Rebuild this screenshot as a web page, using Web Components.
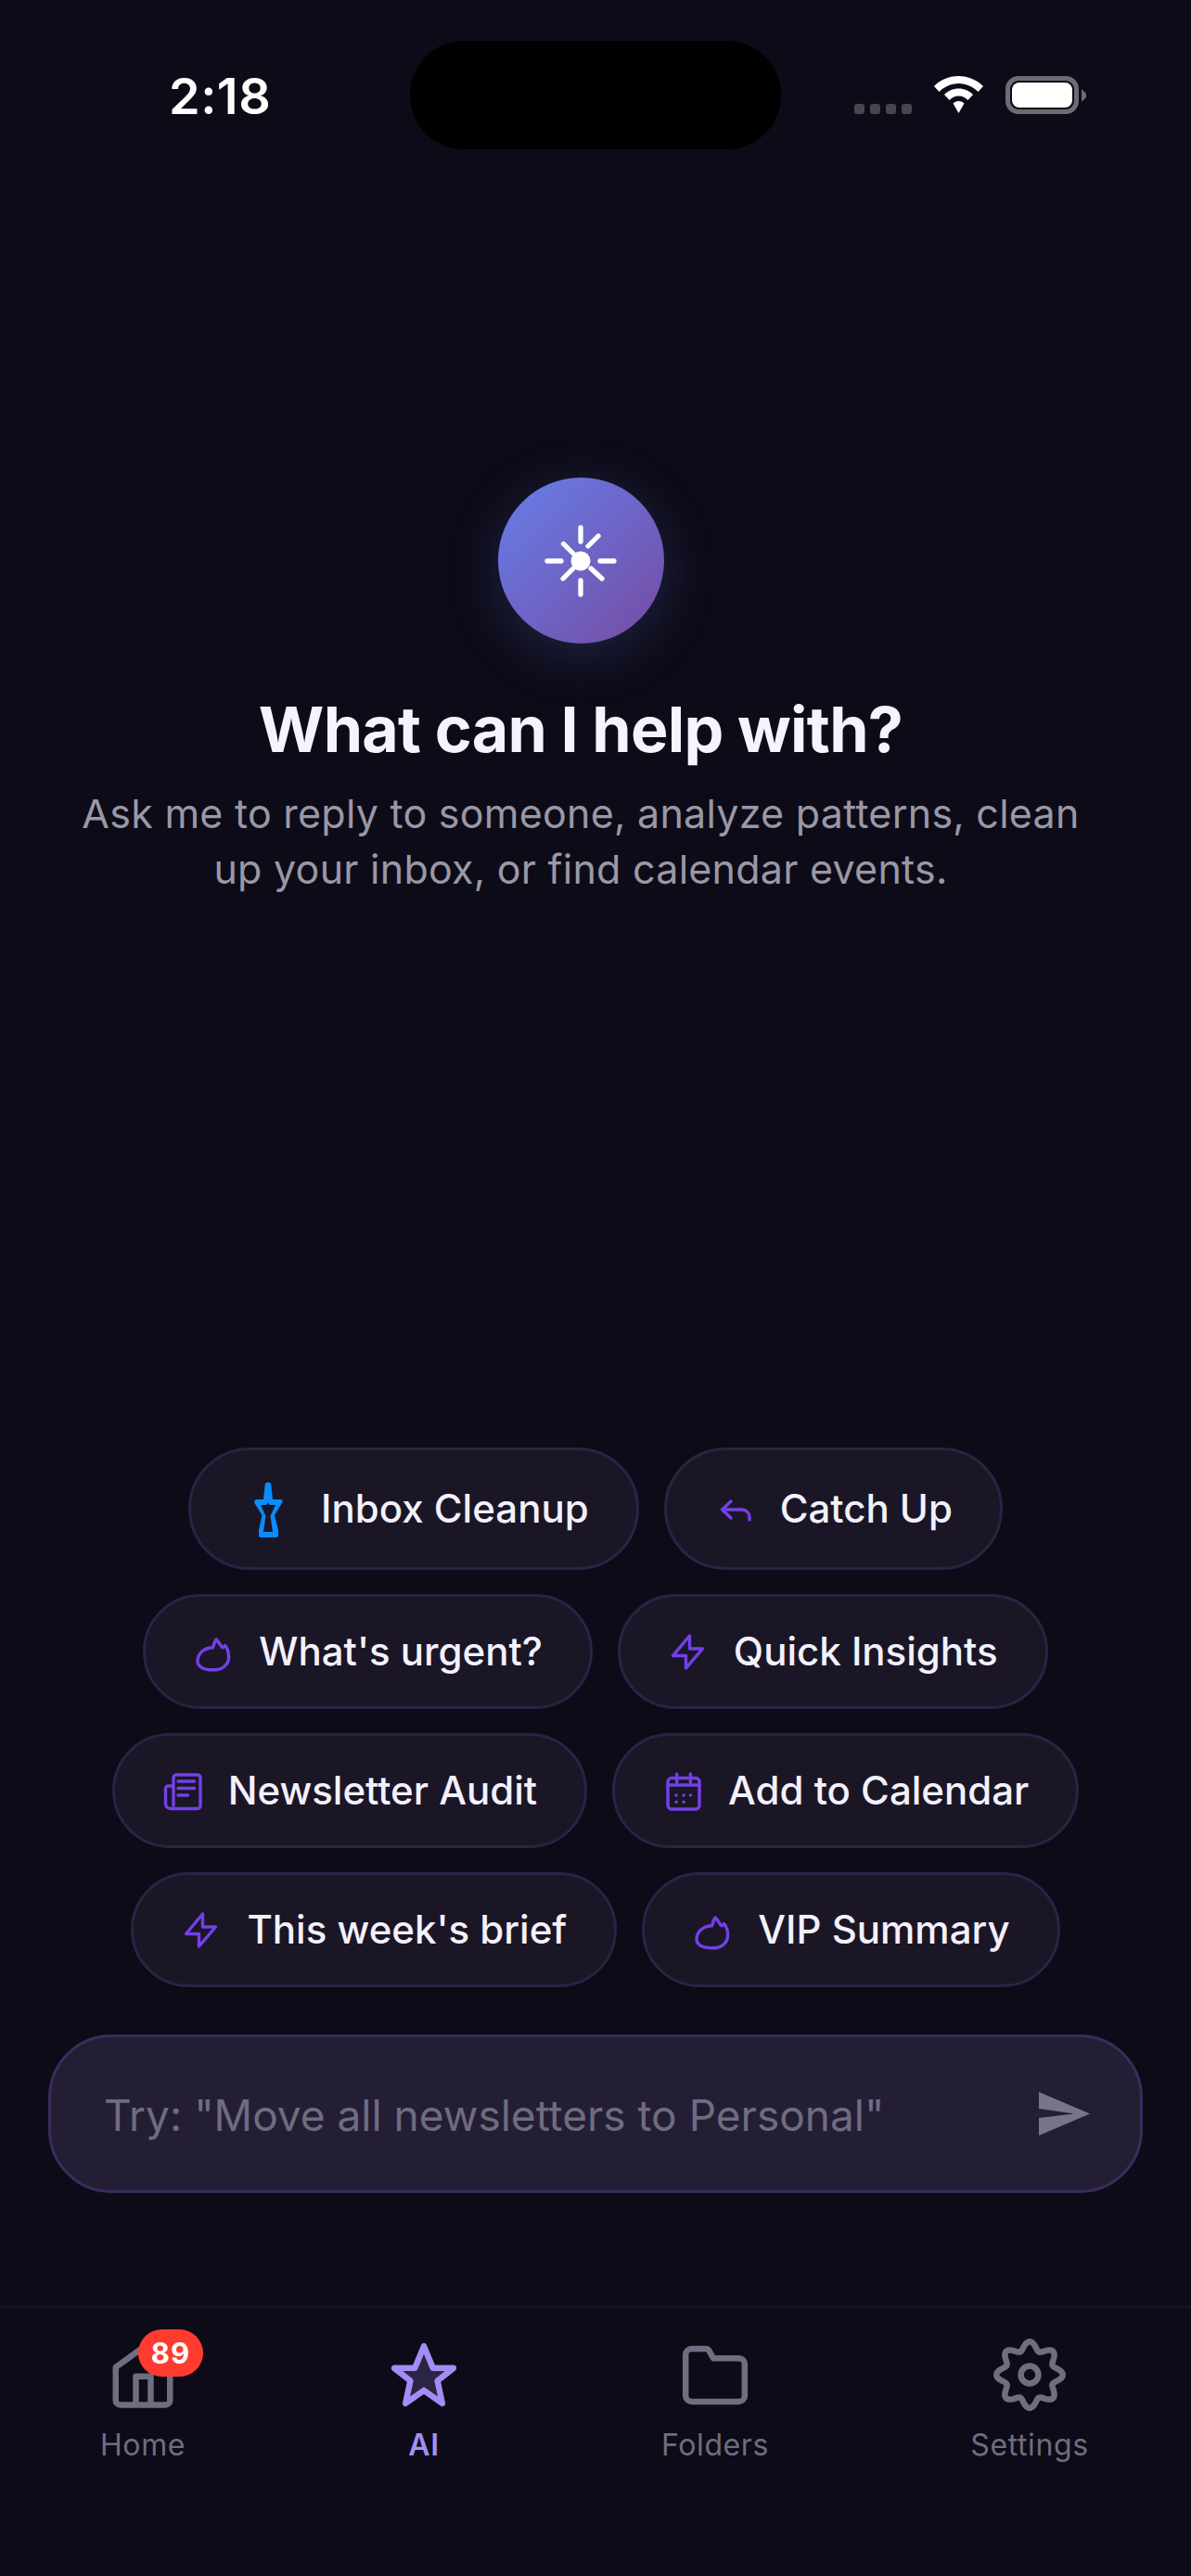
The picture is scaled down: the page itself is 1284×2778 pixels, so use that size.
<!DOCTYPE html>
<html>
<head>
<meta charset="utf-8">
<title>AI</title>
<style>
  html, body { margin: 0; background: #0d0b18; }
  body { font-family: Inter, "Liberation Sans", sans-serif; }
</style>
</head>
<body>
<app-shell>
  <status-bar time="2:18"></status-bar>
  <ai-hero>
    <span slot="title">What can I help with?</span>
    Ask me to reply to someone, analyze patterns, clean<br>up your inbox, or find calendar events.
  </ai-hero>
  <chip-list>
    <ai-chip icon="broom" style="--chip-h:132px;--icon-w:60px">Inbox Cleanup</ai-chip>
    <ai-chip icon="reply">Catch Up</ai-chip>
    <ai-chip icon="flame">What's urgent?</ai-chip>
    <ai-chip icon="bolt">Quick Insights</ai-chip>
    <ai-chip icon="news">Newsletter Audit</ai-chip>
    <ai-chip icon="calendar">Add to Calendar</ai-chip>
    <ai-chip icon="bolt">This week's brief</ai-chip>
    <ai-chip icon="flame">VIP Summary</ai-chip>
  </chip-list>
  <ask-input>Try: "Move all newsletters to Personal"</ask-input>
  <tab-bar>
    <tab-item icon="home" badge="89">Home</tab-item>
    <tab-item icon="star" active>AI</tab-item>
    <tab-item icon="folder">Folders</tab-item>
    <tab-item icon="gear">Settings</tab-item>
  </tab-bar>
</app-shell>

<script>
const CHIP_ICONS = {
  broom: `<svg width="60" height="70" viewBox="21 2 60 70"><path fill="#0a8bff" stroke="none" fill-rule="evenodd" d="M50 8.5Q53 8.5 53.3 11L55 27H64Q66.5 28 65.5 30L57 44 61 60V66Q61 68 59 68H42Q40 68 40 66V60L43.5 44 35.5 31Q34.5 28 37 27H45L46.7 11Q47 8.5 50 8.5ZM42 33H48L50 30.5 52 33H58L52.5 45 55 62H45L47.5 45Z"/></svg>`,
  reply: `<svg width="42" height="42" viewBox="0 0 42 42"><path d="M15 13 5.5 22 15 31M5.5 22H27a8 8 0 0 1 8 8v3"/></svg>`,
  flame: `<svg width="42" height="42" viewBox="0 -6 42 42"><path d="M18.5 10.8C20 7 20.5 3 22.2 2 24 4 27 8.5 28.8 10.8 29.8 10.5 30.8 9.5 31.6 8.5 34.5 12 35.6 17 35.6 21 35.6 30 28 34.8 18.5 34.8 9 34.8 2 31.5 2 25.5 2 16.5 10 10.8 18.5 10.8Z"/></svg>`,
  bolt: `<svg width="42" height="42" viewBox="0 0 42 42"><path d="M20.5 4 2.5 25.5H16.5V39L34.5 18H20.5Z"/></svg>`,
  news: `<svg width="42" height="42" viewBox="0 0 42 42"><path d="M9 37V7a3 3 0 0 1 3-3h23a3 3 0 0 1 3 3v30.5a3 3 0 0 1-3 3H6a5.5 5.5 0 0 1-5.5-5.5V19a3 3 0 0 1 3-3H9M14 11H31.5M14 18.5H31.5M14 26H24.5"/></svg>`,
  calendar: `<svg width="42" height="42" viewBox="0 0 42 42"><rect x="3" y="7.5" width="34" height="33.5" rx="4"/><path d="M12.7 3V12M27.4 3V12M3 15H37"/><g fill="#7340e8" stroke="none"><circle cx="12" cy="26" r="1.7"/><circle cx="20" cy="26" r="1.7"/><circle cx="27.4" cy="26" r="1.7"/><circle cx="12" cy="33.3" r="1.7"/><circle cx="20" cy="33.3" r="1.7"/></g></svg>`
};

function gearPath() {
  // eight soft lobes, same as the tab icon
  let d = "";
  for (let i = 0; i <= 240; i++) {
    const a = (i / 240) * Math.PI * 2 - Math.PI / 2;
    const r = 9.6 + 1.4 * Math.cos(8 * (a + Math.PI / 2));
    d += (i ? "L" : "M") + (12 + r * Math.cos(a)).toFixed(2) + " " + (12 + r * Math.sin(a)).toFixed(2);
  }
  return d + "Z";
}

const TAB_ICONS = {
  home: `<path d="M3 9.5 12 3l9 6.5V20.500a1.500 1.500 0 0 1-1.500 1.500H4.500A1.500 1.500 0 0 1 3 20.500ZM9.700 22V12.500H14.600V22"/>`,
  star: `<path fill="rgba(167,139,250,.2)" d="M12 2.500 15 9.800H21.800L16.500 14 18.100 21.500 12 17.200 5.900 21.500 7.500 14 2.200 9.800H9Z"/>`,
  folder: `<path d="M4.200 3.400H9a1 1 0 0 1 .9.5L11.400 6.500H19.800a2 2 0 0 1 2 2V18.900a2 2 0 0 1-2 2H4.200a2 2 0 0 1-2-2V5.400a2 2 0 0 1 2-2Z"/>`,
  gear: `<path d="${gearPath()}"/><circle cx="12" cy="12" r="2.9"/>`
};

class AppShell extends HTMLElement {
  constructor() {
    super();
    this.attachShadow({ mode: "open" }).innerHTML = `
      <style>
        :host { display: flex; flex-direction: column; width: 1284px; height: 2778px; overflow: hidden; background: #0d0b18; color: #f2f0fa; }
      </style>
      <slot></slot>`;
  }
}

class StatusBar extends HTMLElement {
  constructor() {
    super();
    this.attachShadow({ mode: "open" }).innerHTML = `
      <style>
        :host { display: grid; grid-template-columns: 442px 400px 442px; padding-top: 44px; height: 117px; }
        .time { padding: 33px 0 0 182px; font: 600 54px/53px Inter, sans-serif; color: #fff; letter-spacing: .5px; }
        .notch { background: #000; border-radius: 58px; }
        .right { display: flex; align-items: flex-start; padding: 38px 0 0 79px; }
        .dots { display: flex; gap: 6px; margin-top: 30px; }
        .dots i { width: 11px; height: 11px; border-radius: 3px; background: #47454f; }
        svg { display: block; }
        .wifi { margin-left: 24px; }
        .batt { margin-left: 24px; width: 79px; height: 41px; box-sizing: border-box; border: 5px solid #6d6b75; border-radius: 14px; padding: 2px; }
        .batt b { display: block; height: 100%; background: #fff; border-radius: 8px; }
        .cap { width: 5px; height: 14px; margin: 14px 0 0 3px; background: #6d6b75; clip-path: polygon(0 0, 100% 35%, 100% 65%, 0 100%); }
      </style>
      <div class="time"></div>
      <div class="notch"></div>
      <div class="right">
        <div class="dots"><i></i><i></i><i></i><i></i></div>
        <svg class="wifi" width="53" height="40" viewBox="0 0 53 40">
          <path fill="#fff" d="M26.5 0C36.5 0 46 4 53 11L47.5 17C42 11.500 34.500 8 26.500 8S11 11.500 5.500 17L0 11C7 4 16.500 0 26.500 0Z"/>
          <path fill="#fff" d="M26.500 13.500C32.500 13.500 38 16 42 20L36.500 26C34 23.500 30.500 21.500 26.500 21.500S19 23.500 16.500 26L11 20C15 16 20.500 13.500 26.500 13.500Z"/>
          <path fill="#fff" d="M26.500 27C29 27 31 28 32.500 29.500L26.500 40 20.500 29.500C22 28 24 27 26.500 27Z"/>
        </svg>
        <div class="batt"><b></b></div>
        <div class="cap"></div>
      </div>`;
    this.shadowRoot.querySelector(".time").textContent = this.getAttribute("time");
  }
}

class AiHero extends HTMLElement {
  constructor() {
    super();
    this.attachShadow({ mode: "open" }).innerHTML = `
      <style>
        :host { display: flex; flex-direction: column; align-items: center; padding: 354px 32px 0 0; height: 1400px; box-sizing: border-box; text-align: center; }
        .logo { width: 179px; height: 179px; border-radius: 50%; background: linear-gradient(135deg, #667eea, #764ba2); box-shadow: 0 12px 60px rgba(102,126,234,.22); display: flex; align-items: center; justify-content: center; }
        svg { display: block; }
        h1 { margin: 52px 0 0; font: 700 68px/80px Inter, sans-serif; color: #f5f3fb; letter-spacing: -.7px; }
        p { margin: 21px 0 0; font: 400 43px/60px Inter, sans-serif; color: #9a98a6; letter-spacing: .25px; }
      </style>
      <div class="logo">
        <svg width="80" height="80" viewBox="-40 -40 80 80" fill="none" stroke="#fff" stroke-width="5.3" stroke-linecap="round">
          <circle r="10.500" fill="#fff" stroke="none"/>
          <path d="M0-36V-21M0 21V36M-36 0H-21M21 0H36M-18.500-18.500-8-8M8-16 19-27M11 8 23 19M-19 19-8 8"/>
        </svg>
      </div>
      <h1><slot name="title"></slot></h1>
      <p><slot></slot></p>`;
  }
}

class ChipList extends HTMLElement {
  constructor() {
    super();
    this.attachShadow({ mode: "open" }).innerHTML = `
      <style>
        :host { display: flex; flex-wrap: wrap; justify-content: center; gap: 26px 27px; padding: 0 40px; }
      </style>
      <slot></slot>`;
  }
}

class AiChip extends HTMLElement {
  constructor() {
    super();
    this.attachShadow({ mode: "open" }).innerHTML = `
      <style>
        :host { display: flex; align-items: center; gap: 26px; box-sizing: border-box; min-height: var(--chip-h, 124px); padding: 0 51px 0 54px; background: #1b1626; border: 3px solid #2b2245; border-radius: 66px; color: #f3f1fb; font: 550 42px/50px Inter, sans-serif; white-space: nowrap; }
        .icon { flex: none; width: var(--icon-w, 42px); display: flex; justify-content: center; }
        svg { display: block; overflow: visible; fill: none; stroke: #7340e8; stroke-width: 3.4; stroke-linecap: round; stroke-linejoin: round; }
      </style>
      <span class="icon">${CHIP_ICONS[this.getAttribute("icon")]}</span>
      <slot></slot>`;
  }
}

class AskInput extends HTMLElement {
  constructor() {
    super();
    this.attachShadow({ mode: "open" }).innerHTML = `
      <style>
        :host { display: flex; align-items: center; justify-content: space-between; box-sizing: border-box; margin: 51px 52px 0; height: 171px; padding: 0 54px 0 57px; background: #241e35; border: 3px solid #3a2d5c; border-radius: 68px; font: 400 46px/54px Inter, sans-serif; color: #6f6c80; }
        span { padding-top: 2px; }
        svg { display: block; }
      </style>
      <span><slot></slot></span>
      <svg width="55" height="47" viewBox="0 0 55 47"><path fill="#777587" d="M0 0 55 23.500 0 47V28L38 23.500 0 18Z"/></svg>`;
  }
}

class TabBar extends HTMLElement {
  constructor() {
    super();
    this.attachShadow({ mode: "open" }).innerHTML = `
      <style>
        :host { display: grid; grid-template-columns: 308px 298px 330px 348px; margin-top: 121px; border-top: 3px solid #141026; padding-top: 33px; }
      </style>
      <slot></slot>`;
  }
}

class TabItem extends HTMLElement {
  constructor() {
    super();
    const active = this.hasAttribute("active");
    const badge = this.getAttribute("badge");
    const color = active ? "#a58cf5" : "#6f6d80";
    this.attachShadow({ mode: "open" }).innerHTML = `
      <style>
        :host { display: flex; flex-direction: column; align-items: center; color: ${color}; font: ${active ? 600 : 400} 32px/38px Inter, sans-serif; letter-spacing: .6px; }
        .icon { position: relative; width: 78px; height: 78px; }
        svg { display: block; fill: none; stroke: ${color}; stroke-width: 2; stroke-linecap: round; stroke-linejoin: round; }
        .badge { position: absolute; left: 34px; top: -10px; width: 70px; height: 51px; border-radius: 26px; background: #ff3b30; color: #fff; font: 700 31px/51px Inter, sans-serif; letter-spacing: 1px; text-align: center; }
        .label { margin-top: 18px; }
      </style>
      <div class="icon">
        <svg width="78" height="78" viewBox="0 0 24 24">${TAB_ICONS[this.getAttribute("icon")]}</svg>
        ${badge ? `<div class="badge">${badge}</div>` : ""}
      </div>
      <div class="label"><slot></slot></div>`;
  }
}

customElements.define("app-shell", AppShell);
customElements.define("status-bar", StatusBar);
customElements.define("ai-hero", AiHero);
customElements.define("chip-list", ChipList);
customElements.define("ai-chip", AiChip);
customElements.define("ask-input", AskInput);
customElements.define("tab-bar", TabBar);
customElements.define("tab-item", TabItem);
</script>
</body>
</html>
